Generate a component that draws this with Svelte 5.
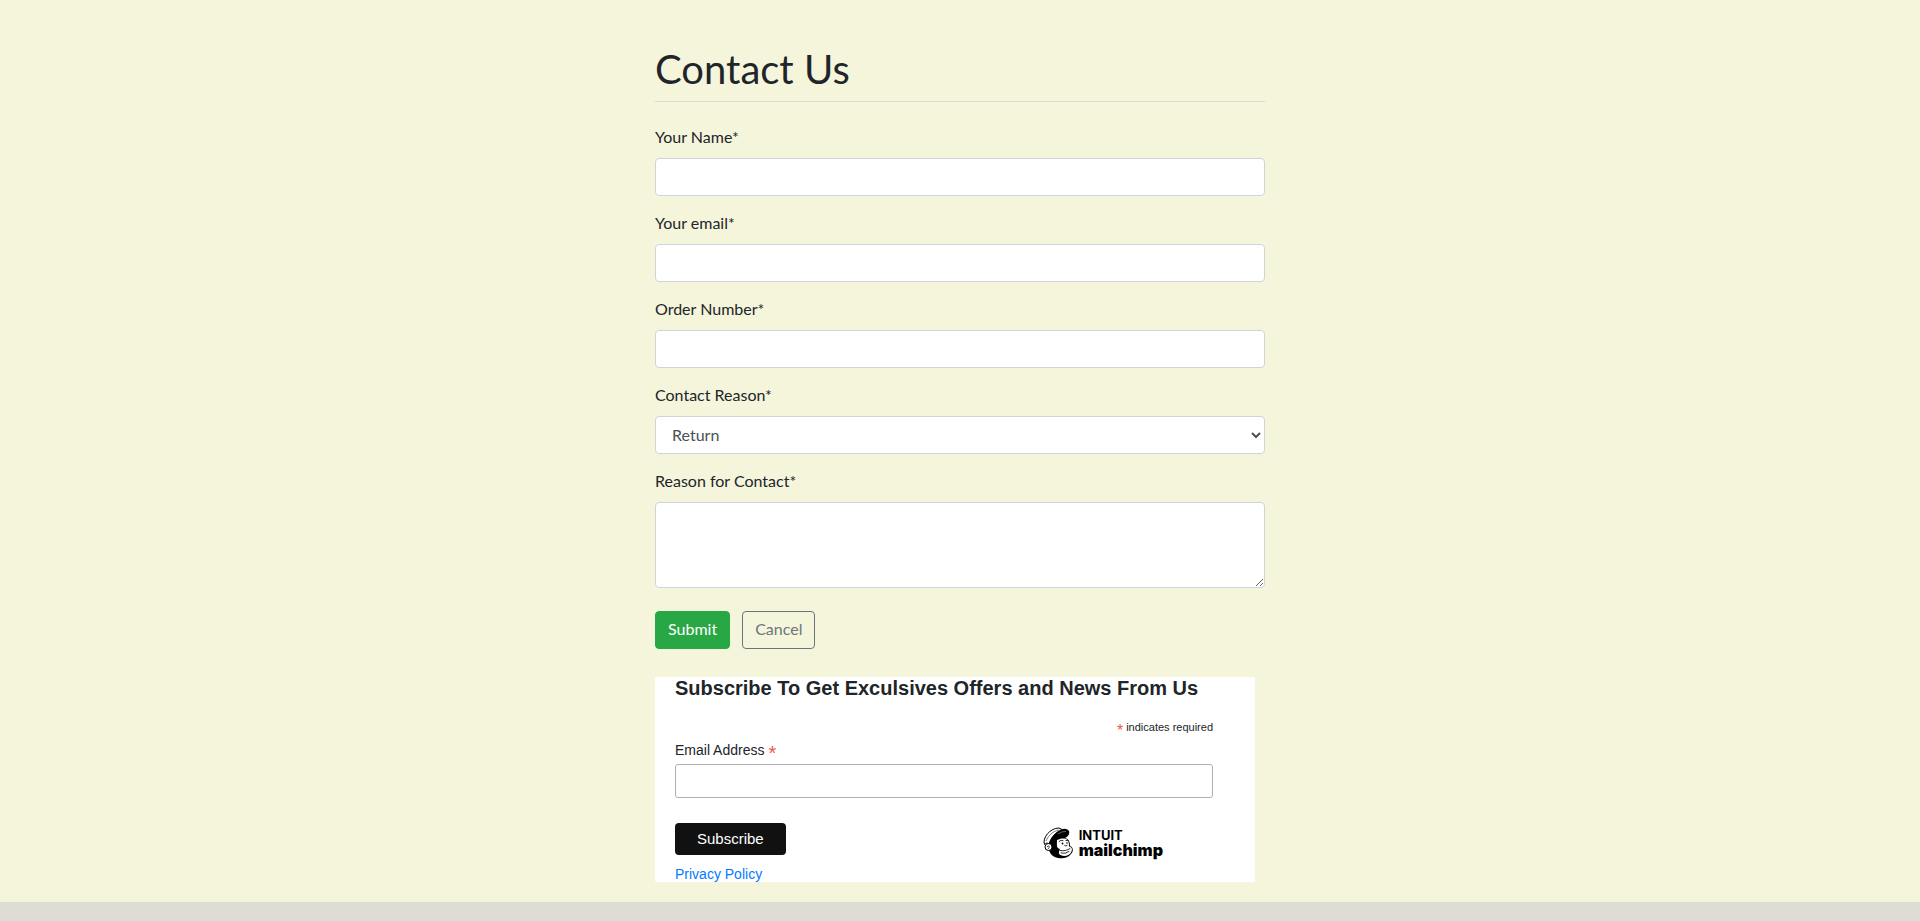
<script>
  const fields = [
    { id: 'name', label: 'Your Name*', type: 'text' },
    { id: 'email', label: 'Your email*', type: 'email' },
    { id: 'order', label: 'Order Number*', type: 'text' },
  ];
</script>

<main>
  <div class="column">
    <form class="contact">
      <h1>Contact Us</h1>
      {#each fields as f}
        <div class="group">
          <label for={f.id}>{f.label}</label>
          <input class="control" id={f.id} type={f.type} />
        </div>
      {/each}
      <div class="group">
        <label for="reason">Contact Reason*</label>
        <select class="control" id="reason">
          <option>Return</option>
        </select>
      </div>
      <div class="group">
        <label for="message">Reason for Contact*</label>
        <textarea class="control" id="message" rows="3"></textarea>
      </div>
      <div class="actions">
        <button class="btn primary" type="submit">Submit</button>
        <button class="btn outline" type="button">Cancel</button>
      </div>
    </form>

    <form class="signup">
      <h2>Subscribe To Get Exculsives Offers and News From Us</h2>
      <p class="hint"><span class="star">*</span> indicates required</p>
      <label for="subscriber">Email Address <span class="star">*</span></label>
      <input id="subscriber" type="email" />
      <div class="row">
        <button class="subscribe" type="submit">Subscribe</button>
        <a class="brand" href="#mailchimp">
          <svg viewBox="0 0 30 32" width="30" height="32" aria-hidden="true">
            <path d="M6 17C7 12 10 8 14 5C18 2 23 0 26 4C27 7 25 10 22 11C26 12 27 15 27 19C30 20 31 24 28 27C25 31 20 32 15 31C10 30 7 27 6 23Z" />
            <path d="M1.500 17.500C-1 11 7 1 16 1L19 2.500C13 5 8 10 6 17C4 15.500 3 16 1.500 17.500Z" fill="#fff" stroke="#000" stroke-width="1" />
            <path d="M3 14C5 9 10 4 16 3" fill="none" stroke="#000" stroke-width=".5" />
            <path d="M14 13C17 12 19 11 23 12C26 13 26 17 26 19.500C29.500 20 29.500 23 28 25.500C26 29 21 30 17.500 28C15 27 16 24 17 22C13 21 14 18 14 13Z" fill="#fff" />
            <circle cx="5.500" cy="20" r="3.500" fill="#fff" stroke="#000" />
            <path d="M4 20Q6 17.500 6.500 20L5 22" fill="none" stroke="#000" stroke-width=".7" />
            <path d="M16 14.500Q18 12.500 20 13.500M23 13.500L25 13.500M21.500 18.500Q22.500 19.500 24 18.500M17 23.500Q23 24.500 27 21.500M18 26Q22 27.500 26 24.500" fill="none" stroke="#000" stroke-width=".8" stroke-linecap="round" />
            <circle cx="19.500" cy="16.500" r=".9" />
            <circle cx="24" cy="16" r=".8" />
            <path d="M15 7Q19 4 23 4.500" fill="none" stroke="#fff" stroke-width=".4" />
          </svg>
          <span class="words">
            <span class="intuit">INTUIT</span>
            <span class="chimp">mailchimp</span>
          </span>
        </a>
      </div>
      <a class="policy" href="#privacy">Privacy Policy</a>
    </form>
  </div>
</main>
<footer></footer>

<style>
  :global(body) {
    margin: 0;
    background: #f5f5dc;
    color: #212529;
    font: 400 16px/24px Lato, sans-serif;
  }
  :global(#app) {
    display: flex;
    flex-direction: column;
    min-height: 100vh;
  }
  * { box-sizing: border-box; }
  main {
    display: flex;
    justify-content: center;
    padding: 45px 15px 20px;
  }
  .column {
    width: calc(33.3333vw - 30px);
    min-width: 320px;
  }
  h1 {
    margin: 0 0 24px;
    padding-bottom: 8px;
    border-bottom: 1px solid #dcdcc6;
    font-size: 40px;
    line-height: 48px;
    font-weight: 400;
  }
  .group {
    display: flex;
    flex-direction: column;
    gap: 10px;
    margin-bottom: 16px;
  }
  .group label {
    line-height: 22px;
  }
  .control {
    display: block;
    width: 100%;
    height: 38px;
    margin: 0;
    padding: 5px 12px 7px;
    border: 1px solid #ced4da;
    border-radius: 4px;
    background: #fff;
    color: #495057;
    font: inherit;
  }
  textarea.control {
    height: auto;
    resize: vertical;
  }
  .actions {
    display: flex;
    gap: 12px;
    padding-top: 7px;
  }
  .btn {
    padding: 5px 12px 7px;
    border: 1px solid #28a745;
    border-radius: 4px;
    font: inherit;
  }
  .primary {
    background: #28a745;
    color: #fff;
  }
  .outline {
    border-color: #6c757d;
    background: transparent;
    color: #6c757d;
  }
  .signup {
    display: flex;
    flex-direction: column;
    max-width: 600px;
    margin-top: 28px;
    padding: 0 42px 0 20px;
    border-radius: 2px;
    background: #fff;
    font: 14px/20px "Liberation Sans", Arial, sans-serif;
  }
  h2 {
    margin: 0 0 18px;
    font-size: 20px;
    line-height: 22px;
    font-weight: 700;
    white-space: nowrap;
  }
  .hint {
    margin: 0;
    text-align: right;
    font-size: 11px;
    line-height: 20px;
  }
  .star {
    color: #e85c41;
    font-size: 16px;
    line-height: 12px;
    vertical-align: -5px;
  }
  .signup label .star {
    font-size: 20px;
  }
  .signup label {
    margin: 3px 0 4px;
  }
  .signup input {
    width: 100%;
    height: 34px;
    padding: 8px 0;
    border: 1px solid #abb0b2;
    border-radius: 3px;
    background: #fff;
    font: inherit;
  }
  .row {
    display: flex;
    justify-content: space-between;
    align-items: flex-start;
    margin-top: 25px;
    padding-right: 50px;
  }
  .subscribe {
    height: 32px;
    padding: 0 22px;
    border: 0;
    border-radius: 4px;
    background: #111;
    color: #fff;
    font: 15px/32px "Liberation Sans", Arial, sans-serif;
  }
  .brand {
    display: flex;
    gap: 6px;
    padding-top: 4px;
    color: #000;
    text-decoration: none;
    font-family: Inter, sans-serif;
  }
  .words {
    display: flex;
    flex-direction: column;
    padding-top: 1px;
  }
  .intuit {
    font-size: 13px;
    line-height: 14px;
    font-weight: 700;
  }
  .chimp {
    font-size: 16px;
    line-height: 16px;
    font-weight: 900;
  }
  .policy {
    align-self: flex-start;
    margin-top: 7px;
    color: #007bff;
    line-height: 16px;
    text-decoration: none;
  }
  footer {
    flex: 1;
    min-height: 16px;
    background: #ddddd5;
  }
</style>
